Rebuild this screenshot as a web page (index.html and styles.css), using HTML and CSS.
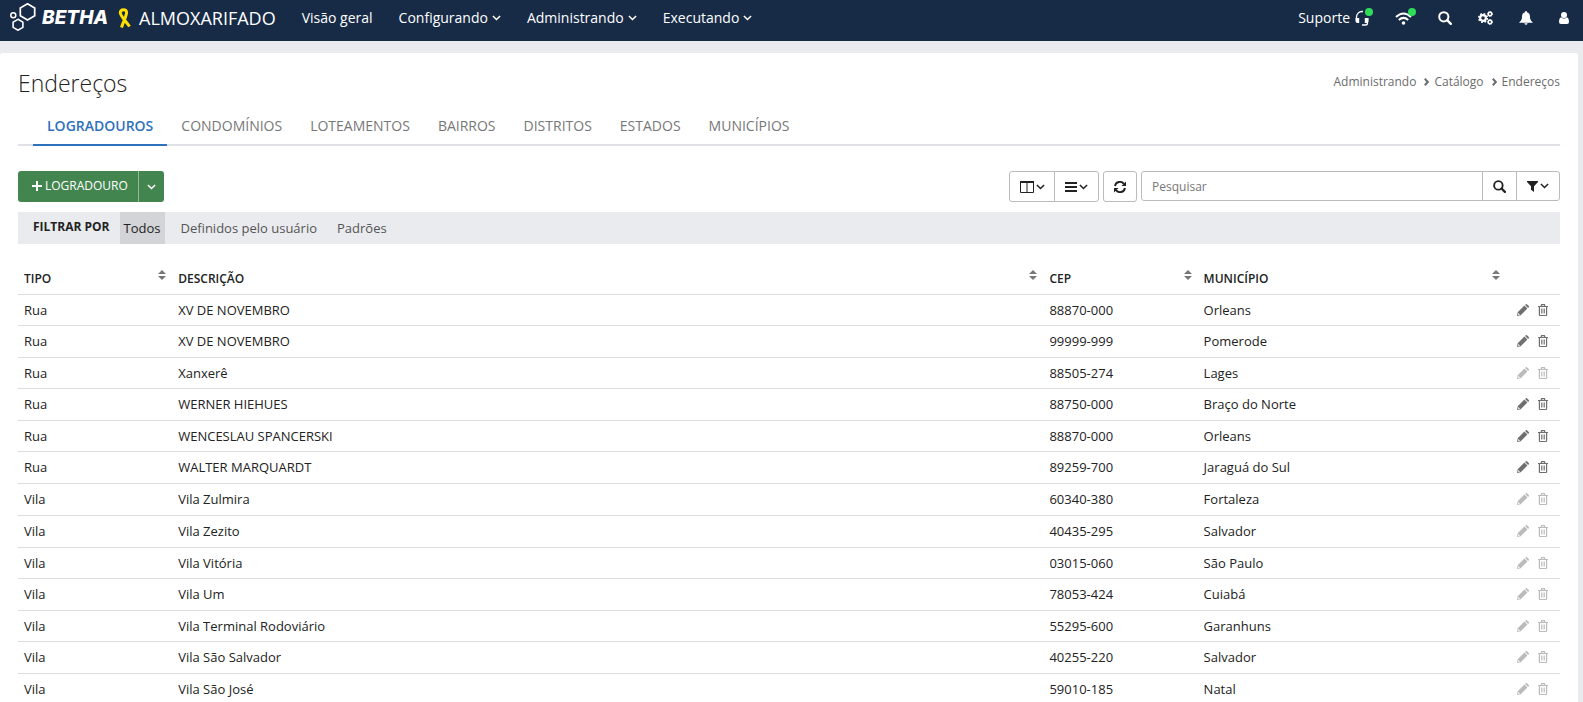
FILE: index.html
```html
<!DOCTYPE html>
<html lang="pt-BR">
<head>
<meta charset="utf-8">
<title>Endereços - Almoxarifado</title>
<link rel="stylesheet" href="styles.css">
</head>
<body>
<svg class="sprite" aria-hidden="true">
  <symbol id="chevron" viewBox="0 0 10 6"><path d="M1 .8 5 4.700 9 .8" fill="none" stroke="currentColor" stroke-width="1.700"/></symbol>
  <symbol id="search" viewBox="0 0 14 14"><circle cx="5.800" cy="5.800" r="4.600" fill="none" stroke="currentColor" stroke-width="2"/><path d="m9.200 9.200 3.600 3.600" stroke="currentColor" stroke-width="2.400" stroke-linecap="round"/></symbol>
  <symbol id="sort" viewBox="0 0 8 10"><path d="M4 0 8 4H0zM0 6h8L4 10z" fill="currentColor"/></symbol>
  <symbol id="pencil" viewBox="0 0 12 12"><path d="M0 12 .7 8.300 7.400 1.600l3 3L3.700 11.300zM8.100.9l.7-.7q.6-.4 1.100 0l1.900 1.900q.4.5 0 1.100l-.7.7z" fill="currentColor"/><path d="m1.300 9 1.700 1.700-1.300.3-.7-.7z" fill="#fff"/></symbol>
  <symbol id="trash" viewBox="0 0 10 12"><path d="M0 2.500h10M3 2.500l.6-1.800h2.800l.6 1.800M1.400 2.500v8.200q0 .8.800.8h5.600q.8 0 .8-.8V2.500" fill="none" stroke="currentColor" stroke-width="1.200"/><path d="M3.500 4.500v5M5 4.500v5M6.500 4.500v5" fill="none" stroke="currentColor" stroke-width=".8"/></symbol>
</svg>

<header class="topbar">
  <a class="brand" href="#" aria-label="Betha Almoxarifado">
    <svg class="logo-mark" viewBox="0 0 26 28" width="26" height="28" fill="none" stroke="#fff"><path d="m17.500.8 7.200 4.200v7.700l-7.200 4.200-7.200-4.200V5z" stroke-width="1.700"/><path d="m8 16.300 4.900 2.800v5.300L8 27.200l-4.900-2.800v-5.300z" stroke-width="1.600"/><circle cx="3.300" cy="12.200" r="2.500" stroke-width="1.500"/></svg>
    <span class="logo-name">BETHA</span>
    <svg class="ribbon" viewBox="0 0 14 20" width="14" height="20" fill="none" stroke="#ffde00" stroke-width="3"><path d="M11.500 18.500C8 13 2 8 2.300 4.500 2.500 1 8.500.500 8.600 4.300 8.600 8 5.500 13 3.500 19.500"/></svg>
    <span class="product">ALMOXARIFADO</span>
  </a>
  <nav class="menu">
    <a href="#">Visão geral</a>
    <a href="#">Configurando<svg class="caret"><use href="#chevron"/></svg></a>
    <a href="#">Administrando<svg class="caret"><use href="#chevron"/></svg></a>
    <a href="#">Executando<svg class="caret"><use href="#chevron"/></svg></a>
  </nav>
  <div class="tools">
    <a class="tool support" href="#">Suporte
      <span class="badged"><svg viewBox="0 0 14 16" width="14" height="16"><path d="M1.500 9V7A5.500 5.500 0 0 1 7 1.500h1M12.500 8v5q0 2-2 2H7" fill="none" stroke="#fff" stroke-width="1.300"/><path d="M.5 8h3.700v5H2.500q-2 0-2-2zM9.800 8h3.700v3q0 2-2 2H9.800z" fill="#fff"/></svg><i class="dot"></i></span></a>
    <a class="tool" href="#" aria-label="Conexão"><span class="badged"><svg viewBox="0 -2 17 16" width="17" height="16" fill="none" stroke="#fff" stroke-width="2"><path d="M1 5Q8.500-2 16 5M3.800 8q4.700-4.200 9.400 0"/><circle cx="8.500" cy="11" r="1.800" fill="#fff" stroke="none"/></svg><i class="dot"></i></span></a>
    <a class="tool" href="#" aria-label="Pesquisar"><svg width="14" height="14"><use href="#search"/></svg></a>
    <a class="tool" href="#" aria-label="Configurações"><svg viewBox="0 0 15 14" width="15" height="14" fill="none" stroke="#fff"><circle cx="5" cy="7" r="2.900" stroke-width="2.200"/><circle cx="5" cy="7" r="4.300" stroke-width="1.600" stroke-dasharray="1.700 1.677"/><circle cx="12" cy="3" r="1.700" stroke-width="1.500"/><circle cx="12" cy="3" r="2.500" stroke-width="1" stroke-dasharray="1.200 .763"/><circle cx="12" cy="11" r="1.700" stroke-width="1.500"/><circle cx="12" cy="11" r="2.500" stroke-width="1" stroke-dasharray="1.200 .763"/></svg></a>
    <a class="tool" href="#" aria-label="Notificações"><svg viewBox="0 0 14 14" width="14" height="14" fill="#fff"><path d="M7 0q1 0 1 1.200C10.500 1.800 11 4 11 6c0 2.500 1 3.800 2.700 5.200v.5H.3v-.5C2 9.800 3 8.500 3 6c0-2 .5-4.200 3-4.800Q6 0 7 0zM5.300 12.200h3.400q-.4 1.600-1.700 1.600t-1.700-1.600z"/></svg></a>
    <a class="tool" href="#" aria-label="Usuário"><svg viewBox="0 0 10 12" width="10" height="12" fill="#fff"><circle cx="5" cy="3" r="3"/><path d="M2.200 5.200Q5 8 7.800 5.200 10 6 10 10q0 2-2 2H2q-2 0-2-2 0-4 2.200-4.800z"/></svg></a>
  </div>
</header>

<main class="page">
  <div class="page-head">
    <h1>Endereços</h1>
    <nav class="crumbs" aria-label="Trilha">
      <a href="#">Administrando</a><svg viewBox="0 0 5 8" width="5" height="8"><path d="m.8.8 3 3.200-3 3.200" fill="none" stroke="currentColor" stroke-width="2"/></svg><a href="#">Catálogo</a><svg viewBox="0 0 5 8" width="5" height="8"><path d="m.8.8 3 3.200-3 3.200" fill="none" stroke="currentColor" stroke-width="2"/></svg><a href="#">Endereços</a>
    </nav>
  </div>

  <nav class="tabs">
    <a class="active" href="#">LOGRADOUROS</a>
    <a href="#">CONDOMÍNIOS</a>
    <a href="#">LOTEAMENTOS</a>
    <a href="#">BAIRROS</a>
    <a href="#">DISTRITOS</a>
    <a href="#">ESTADOS</a>
    <a href="#">MUNICÍPIOS</a>
  </nav>

  <div class="actions">
    <div class="create">
      <button type="button" class="create-main"><svg viewBox="0 0 10 10" width="10" height="10"><path d="M5 0v10M0 5h10" stroke="currentColor" stroke-width="2"/></svg>LOGRADOURO</button>
      <button type="button" class="create-more" aria-label="Mais opções"><svg class="caret"><use href="#chevron"/></svg></button>
    </div>
    <div class="right">
      <div class="group">
        <button type="button" aria-label="Colunas"><svg viewBox="0 0 14 12" width="14" height="12"><path d="M.5 1h13v10.500H.5zM7 1v10.500" fill="none" stroke="currentColor"/><path d="M0 1h14" stroke="currentColor" stroke-width="2"/></svg><svg class="caret"><use href="#chevron"/></svg></button>
        <button type="button" aria-label="Densidade"><svg viewBox="0 0 12 10" width="12" height="10"><path d="M0 1h12M0 5h12M0 9h12" stroke="currentColor" stroke-width="2"/></svg><svg class="caret"><use href="#chevron"/></svg></button>
      </div>
      <button type="button" class="refresh" aria-label="Atualizar"><svg viewBox="0 0 12 12" width="12" height="12"><path d="M1 5A5 5 0 0 1 10 3M11 7a5 5 0 0 1-9 2" fill="none" stroke="currentColor" stroke-width="1.900"/><path d="M12 .5V5H7.500zM0 11.500V7h4.500z" fill="currentColor"/></svg></button>
      <form class="search">
        <input type="text" placeholder="Pesquisar" aria-label="Pesquisar">
        <button type="button" class="go" aria-label="Buscar"><svg width="13" height="13"><use href="#search"/></svg></button>
        <button type="button" class="filter" aria-label="Filtros"><svg viewBox="0 0 11 11" width="11" height="11"><path d="M0 0h11v1L7 5.200V11L4 8.800V5.200L0 1z" fill="currentColor"/></svg><svg class="caret"><use href="#chevron"/></svg></button>
      </form>
    </div>
  </div>

  <div class="filters">
    <strong>FILTRAR POR</strong>
    <a class="active" href="#">Todos</a>
    <a href="#">Definidos pelo usuário</a>
    <a href="#">Padrões</a>
  </div>

  <table class="grid">
    <colgroup><col class="c-type"><col><col class="c-cep"><col class="c-city"><col class="c-act"></colgroup>
    <thead>
      <tr>
        <th><div>TIPO<svg class="sort"><use href="#sort"/></svg></div></th>
        <th><div>DESCRIÇÃO<svg class="sort"><use href="#sort"/></svg></div></th>
        <th><div>CEP<svg class="sort"><use href="#sort"/></svg></div></th>
        <th><div>MUNICÍPIO<svg class="sort"><use href="#sort"/></svg></div></th>
        <th></th>
      </tr>
    </thead>
    <tbody id="rows"></tbody>
  </table>
</main>
<script src="rows.js"></script>
</body>
</html>
```
FILE: rows.js
```js
const rows = [
  ["Rua", "XV DE NOVEMBRO", "88870-000", "Orleans", true],
  ["Rua", "XV DE NOVEMBRO", "99999-999", "Pomerode", true],
  ["Rua", "Xanxerê", "88505-274", "Lages", false],
  ["Rua", "WERNER HIEHUES", "88750-000", "Braço do Norte", true],
  ["Rua", "WENCESLAU SPANCERSKI", "88870-000", "Orleans", true],
  ["Rua", "WALTER MARQUARDT", "89259-700", "Jaraguá do Sul", true],
  ["Vila", "Vila Zulmira", "60340-380", "Fortaleza", false],
  ["Vila", "Vila Zezito", "40435-295", "Salvador", false],
  ["Vila", "Vila Vitória", "03015-060", "São Paulo", false],
  ["Vila", "Vila Um", "78053-424", "Cuiabá", false],
  ["Vila", "Vila Terminal Rodoviário", "55295-600", "Garanhuns", false],
  ["Vila", "Vila São Salvador", "40255-220", "Salvador", false],
  ["Vila", "Vila São José", "59010-185", "Natal", false]
];
document.getElementById("rows").innerHTML = rows.map(([type, name, cep, city, editable]) => {
  const off = editable ? "" : " disabled";
  return `<tr><td>${type}</td><td>${name}</td><td>${cep}</td><td>${city}</td>
    <td><div class="row-actions">
      <button type="button" aria-label="Editar"${off}><svg width="12" height="12"><use href="#pencil"/></svg></button>
      <button type="button" aria-label="Excluir"${off}><svg width="10" height="12"><use href="#trash"/></svg></button>
    </div></td></tr>`;
}).join("");
```
FILE: styles.css
```css
* { box-sizing: border-box; }
html { overflow: hidden; }
body {
  margin: 0;
  background: #eaebef;
  color: #222;
  font: 13px/18px "Open Sans", "Noto Sans", sans-serif;
}
a { color: inherit; text-decoration: none; }
button { font: inherit; color: inherit; cursor: pointer; }
svg { flex: none; display: block; }
.sprite { position: absolute; width: 0; height: 0; }
.caret { width: 9px; height: 6px; }

.topbar {
  display: flex;
  align-items: center;
  height: 41px;
  padding: 0 14px 5px 10px;
  background: #172b47;
  color: #fff;
  font-size: 14px;
}
.brand { display: flex; align-items: center; }
.logo-mark { margin-top: -2px; }
.logo-name {
  margin: 0 10px 0 6px;
  font: italic 800 19px/24px Inter, "Open Sans", sans-serif;
}
.product { margin-left: 7px; font-size: 18px; line-height: 24px; }
.menu { display: flex; gap: 26px; margin-left: 26px; }
.menu a { display: flex; align-items: center; gap: 4px; }
.tools { display: flex; align-items: center; margin-left: auto; gap: 26px; }
.tool { display: flex; align-items: center; }
.support { gap: 5px; }
.badged { position: relative; display: block; }
.dot {
  position: absolute;
  top: -2px;
  right: -4px;
  width: 8px;
  height: 8px;
  border-radius: 50%;
  background: #2fdc5a;
}

.page {
  min-height: 649px;
  margin: 12px 5px 0 0;
  padding: 15px 18px 0;
  border-radius: 3px;
  background: #fff;
}
.page-head { display: flex; justify-content: space-between; }
h1 { margin: 0; font-size: 23px; line-height: 30px; font-weight: 300; }
.crumbs {
  display: flex;
  align-items: center;
  height: 28px;
  gap: 5px;
  color: #6c6c6c;
  font-size: 12px;
}
.crumbs svg { margin-left: 3px; }

.tabs {
  display: flex;
  margin-top: 12px;
  padding-left: 15px;
  border-bottom: 2px solid #e0e1e6;
  color: #777;
  font-size: 14px;
}
.tabs a { margin-bottom: -2px; padding: 6px 14px 8px; line-height: 20px; border-bottom: 2px solid transparent; }
.tabs .active { color: #3071bd; border-color: #3071bd; font-weight: 600; }

.actions { display: flex; justify-content: space-between; margin-top: 25px; }
.create { display: flex; height: 31px; color: #fff; font-size: 12px; }
.create button { display: flex; align-items: center; border: 0; background: #43854f; }
.create .create-main { gap: 3px; padding: 0 10px 2px 14px; border-radius: 3px 0 0 3px; }
.create .create-more { padding: 0 8px; border-left: 1px solid #93b99a; border-radius: 0 3px 3px 0; }
.right { display: flex; gap: 4px; }
.group { display: flex; }
.right button {
  display: flex;
  align-items: center;
  justify-content: center;
  gap: 2px;
  height: 31px;
  padding: 0;
  border: 1px solid #bbb;
  background: #fff;
}
.group button { width: 46px; border-radius: 3px 0 0 3px; }
.group button + button { width: 45px; margin-left: -1px; border-radius: 0 3px 3px 0; }
.right .refresh { width: 34px; border-radius: 3px; }
.search { display: flex; width: 419px; }
.search input {
  flex: 1;
  min-width: 0;
  height: 30px;
  padding: 0 10px;
  border: 1px solid #bbb;
  border-radius: 3px 0 0 3px;
  color: #222;
  font: inherit;
  font-size: 12px;
}
.search input::placeholder { color: #777; }
.right .go, .right .filter { height: 30px; margin-left: -1px; }
.go { width: 35px; }
.filter { width: 44px; border-radius: 0 3px 3px 0; }

.filters {
  display: flex;
  align-items: stretch;
  height: 32px;
  margin-top: 10px;
  padding-left: 15px;
  background: #eaebef;
  color: #555;
  line-height: 32px;
}
.filters strong { margin-right: 10px; color: #222; font-size: 12px; line-height: 30px; }
.filters a { margin-right: 12px; padding: 0 4px; }
.filters .active { background: #d3d4d8; color: #222; }

.grid { width: 100%; margin-top: 20px; border-collapse: collapse; table-layout: fixed; }
.c-type, .c-cep { width: 10%; }
.c-city { width: 20%; }
.c-act { width: 54px; }
th { padding: 6px; font-size: 12px; font-weight: 600; text-align: left; }
th > div { display: flex; justify-content: space-between; line-height: 18px; }
.sort { width: 8px; height: 10px; color: #777; }
td { padding: 6px; border-top: 1px solid #ddd; }
tr:nth-child(even) td, tr:nth-child(7n) td { padding-bottom: 7px; }
.row-actions { display: flex; justify-content: flex-end; align-items: center; gap: 9px; height: 18px; padding-right: 6px; }
.row-actions button { padding: 0; border: 0; background: none; color: #6f6f6f; }
.row-actions button:disabled { color: #bbb; cursor: default; }
```
